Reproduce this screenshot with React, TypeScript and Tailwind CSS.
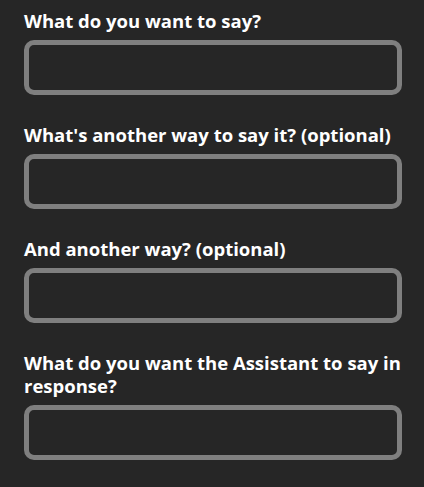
const fields = [
  { id: "say", label: "What do you want to say?" },
  { id: "alt1", label: "What's another way to say it? (optional)" },
  { id: "alt2", label: "And another way? (optional)" },
  { id: "response", label: "What do you want the Assistant to say in response?" },
];

export default function App() {
  return (
    <div className="min-h-screen w-full bg-[#262626] pl-6 pr-[22px] pt-[9px] font-['Open_Sans',sans-serif]">
      <div className="flex flex-col gap-7">
        {fields.map((field) => (
          <div key={field.id} className="flex flex-col">
            <label htmlFor={field.id} className="text-[18.5px] font-bold leading-[23px] text-white">
              {field.label}
            </label>
            <input
              id={field.id}
              type="text"
              className="mt-2 h-[55px] w-full rounded-[10px] border-[5px] border-[#7f7f7f] bg-[#262626] px-3 text-lg text-white outline-none"
            />
          </div>
        ))}
      </div>
    </div>
  );
}
